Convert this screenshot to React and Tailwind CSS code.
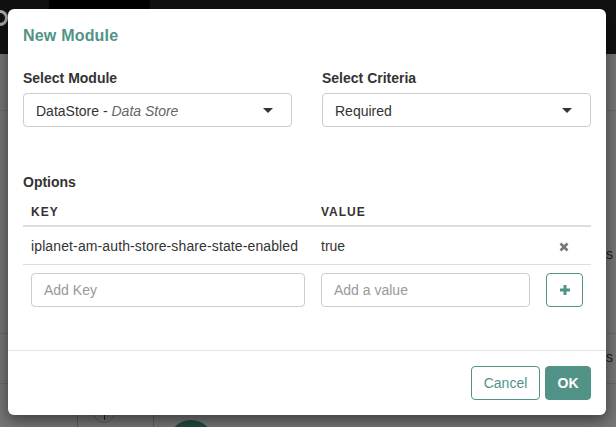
import React from 'react';

const font = { fontFamily: '"Liberation Sans", Arial, sans-serif' };

function Caret() {
  return <span className="w-0 h-0 border-x-[5px] border-x-transparent border-t-[5px] border-t-[#333]"></span>;
}

function SelectBox({ children }) {
  return (
    <div className="h-[34px] flex items-center justify-between pl-3 pr-[18px] border border-[#ccc] rounded-[4px] text-sm text-[#333]">
      <span className="pt-px">{children}</span>
      <Caret />
    </div>
  );
}

export default function App() {
  return (
    <div style={font} className="relative w-[616px] h-[427px] overflow-hidden bg-[#767676]">
      {/* page behind the backdrop */}
      <div className="h-[54px] bg-[#111]">
        <div className="ml-[49px] w-[101px] h-[9px] bg-black"></div>
      </div>
      <div className="h-[57px] border-b border-[#6a6a6a]"></div>
      <div className="h-[223px] border-b border-[#6a6a6a]"></div>
      <div className="h-[50px] border-b border-[#6a6a6a]"></div>
      <div className="absolute left-[-8px] top-[10px] w-4 h-4 rounded-full border-[3px] border-[#aaa]"></div>
      <div className="absolute left-[77px] top-[400px] bottom-0 w-[77px] border-x border-[#5c5c5c]"></div>
      <div className="absolute left-[93px] top-[401px] w-[22px] h-[22px] rounded-full border border-[#5c5c5c]"></div>
      <div className="absolute left-[104px] top-[414px] w-px h-[6px] bg-[#222]"></div>
      <div className="absolute left-[168px] top-[420px] w-[46px] h-[46px] rounded-full bg-[#1f4a41]"></div>
      <span className="absolute left-[606px] top-[244px] text-sm whitespace-nowrap text-[#1c1c1c]">s t</span>
      <span className="absolute left-[606px] top-[347px] text-sm whitespace-nowrap text-[#1c1c1c]">s f</span>

      <div className="absolute left-2 top-[9px] w-[598px] h-[406px] bg-white rounded-md shadow-[0_5px_15px_rgba(0,0,0,0.5)] flex flex-col">
        <div className="flex-1 pt-[18px] px-[15px]">
          <h4 className="text-base leading-[18px] font-bold tracking-[0.2px] text-[#519387]">New Module</h4>
          <div className="mt-[23px] grid grid-cols-2 gap-x-[30px]">
            <div>
              <div className="text-sm leading-5 font-bold text-[#333] mb-[5px]">Select Module</div>
              <SelectBox>DataStore - <em className="text-[#666]">Data Store</em></SelectBox>
            </div>
            <div>
              <div className="text-sm leading-5 font-bold text-[#333] mb-[5px]">Select Criteria</div>
              <SelectBox>Required</SelectBox>
            </div>
          </div>
          <div className="mt-[45px] text-sm leading-5 font-bold text-[#333]">Options</div>
          <div className="mt-[6px] text-sm text-[#333]">
            <div className="flex items-center h-[29px] border-b-2 border-[#ddd] px-2 text-xs font-bold tracking-[1px]">
              <span className="w-[290px]">KEY</span>
              <span>VALUE</span>
            </div>
            <div className="flex items-center h-[38px] border-b border-[#ddd] px-2">
              <span className="w-[290px] tracking-[0.12px] whitespace-nowrap">iplanet-am-auth-store-share-state-enabled</span>
              <span className="flex-1">true</span>
              <svg className="mr-[14px] mt-[2px]" width="10" height="10" viewBox="0 0 10 10">
                <path d="M1.5 1.5L8.5 8.5M8.5 1.5L1.5 8.5" stroke="#777" strokeWidth="2.6" />
              </svg>
            </div>
            <div className="flex items-center pt-2 px-2">
              <div className="w-[274px] h-[34px] flex items-center px-3 border border-[#ccc] rounded-[4px] text-[#999]">Add Key</div>
              <div className="ml-4 w-[209px] h-[34px] flex items-center px-3 border border-[#ccc] rounded-[4px] text-[#999]">Add a value</div>
              <div className="ml-4 w-[37px] h-[34px] flex items-center justify-center border border-[#519387] rounded-[4px]">
                <svg width="12" height="12" viewBox="0 0 12 12">
                  <path d="M6 1V11M1 6H11" stroke="#519387" strokeWidth="3" />
                </svg>
              </div>
            </div>
          </div>
        </div>
        <div className="h-[65px] border-t border-[#e5e5e5] flex items-start justify-end gap-[5px] pt-[15px] pr-[15px] text-sm">
          <div className="w-[69px] h-[34px] flex items-center justify-center border border-[#519387] rounded-[4px] text-[#519387]">Cancel</div>
          <div className="w-[46px] h-[34px] flex items-center justify-center border border-[#519387] rounded-[4px] bg-[#519387] text-white font-bold">OK</div>
        </div>
      </div>
    </div>
  );
}
